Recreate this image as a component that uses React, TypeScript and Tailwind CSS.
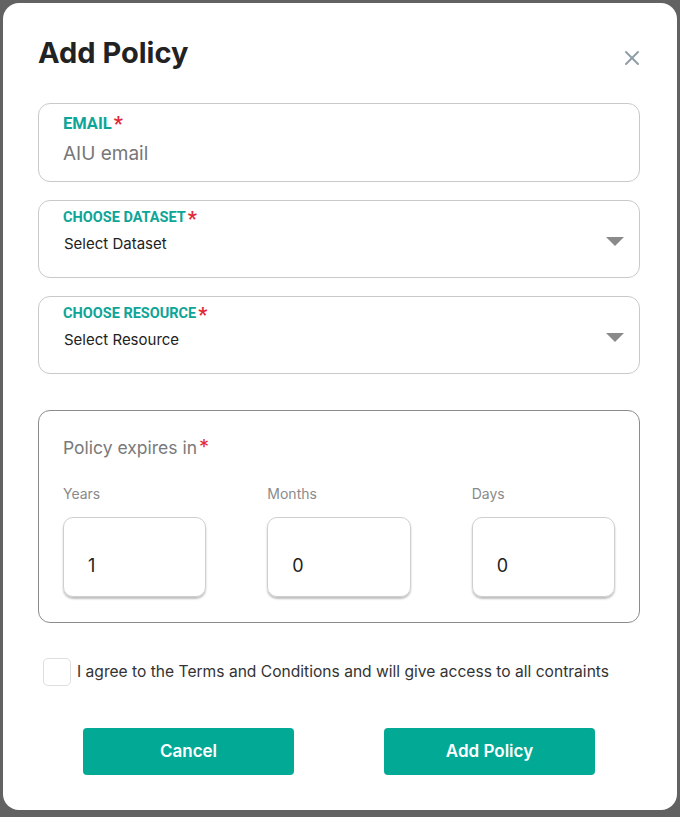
import { X } from "lucide-react";

const font = { fontFamily: "Inter, 'Noto Sans', sans-serif" };

function Req() {
  return <span className="ml-[2px] text-[20px] leading-none text-[#e0283a] relative top-[2px]">*</span>;
}

function SelectBox({ label, value }: { label: string; value: string }) {
  return (
    <div className="relative h-[78px] rounded-[12px] border border-[#c9c9c9] pl-[24px] pt-[6px]">
      <div className="flex items-start text-[14.5px] font-bold text-[#0da597]" style={{ fontFamily: "Roboto, sans-serif" }}>
        {label}
        <Req />
      </div>
      <div className="mt-[4px] pl-[1px] text-[15px] text-[#222]">{value}</div>
      <svg className="absolute right-[15px] top-[36px]" width="18" height="9" viewBox="0 0 18 9">
        <path d="M0 0 H18 L9 9 Z" fill="#8a8a8a" />
      </svg>
    </div>
  );
}

function NumBox({ label, value }: { label: string; value: string }) {
  return (
    <div>
      <div className="text-[14px] text-[#8a8a8a]">{label}</div>
      <div className="mt-[13px] flex h-[80px] items-center rounded-[10px] border border-[#cfcfcf] pl-[24px] pt-[16px] text-[18px] text-[#222] shadow-[0_2px_2px_rgba(0,0,0,0.25)]">
        {value}
      </div>
    </div>
  );
}

export default function App() {
  return (
    <div className="h-[817px] w-[680px] bg-[#626262] p-[3px]" style={font}>
      <div className="flex h-[807px] w-[674px] flex-col rounded-[16px] bg-white pl-[35px] pr-[37px]">
        {/* Header */}
        <div className="flex items-center justify-between pt-[31px]">
          <h2 className="text-[29px] font-bold leading-[38px] text-[#222]">Add Policy</h2>
          <X className="mr-[-4px] mt-[10px] h-[24px] w-[24px] text-[#8f9ea6]" strokeWidth={2} />
        </div>

        {/* Email */}
        <div className="mt-[31px] h-[79px] rounded-[12px] border border-[#c9c9c9] pl-[24px] pt-[8px]">
          <div className="flex items-start text-[16.5px] font-bold text-[#0da597]" style={{ fontFamily: "Roboto, sans-serif" }}>
            EMAIL
            <Req />
          </div>
          <div className="mt-[3px] text-[19px] text-[#777]">AIU email</div>
        </div>

        <div className="mt-[18px]">
          <SelectBox label="CHOOSE DATASET" value="Select Dataset" />
        </div>
        <div className="mt-[18px]">
          <SelectBox label="CHOOSE RESOURCE" value="Select Resource" />
        </div>

        {/* Expiry */}
        <div className="mt-[36px] h-[213px] rounded-[12px] border border-[#8c8c8c] px-[24px] pt-[24px]">
          <div className="flex items-start text-[17.5px] text-[#7a7a7a]">
            Policy expires in
            <Req />
          </div>
          <div className="mt-[22px] grid grid-cols-3 gap-[61px]">
            <NumBox label="Years" value="1" />
            <NumBox label="Months" value="0" />
            <NumBox label="Days" value="0" />
          </div>
        </div>

        {/* Terms */}
        <label className="mt-[35px] flex items-center gap-[6px] pl-[5px]">
          <span className="h-[28px] w-[28px] rounded-[5px] border border-[#dedede]" />
          <span className="text-[15.6px] text-[#333]">
            I agree to the Terms and Conditions and will give access to all contraints
          </span>
        </label>

        {/* Actions */}
        <div className="mt-[42px] flex justify-center gap-[90px]">
          <button className="h-[47px] w-[211px] rounded-[4px] bg-[#02a995] text-[17px] font-semibold text-white">Cancel</button>
          <button className="h-[47px] w-[211px] rounded-[4px] bg-[#02a995] text-[17px] font-semibold text-white">Add Policy</button>
        </div>
      </div>
    </div>
  );
}
